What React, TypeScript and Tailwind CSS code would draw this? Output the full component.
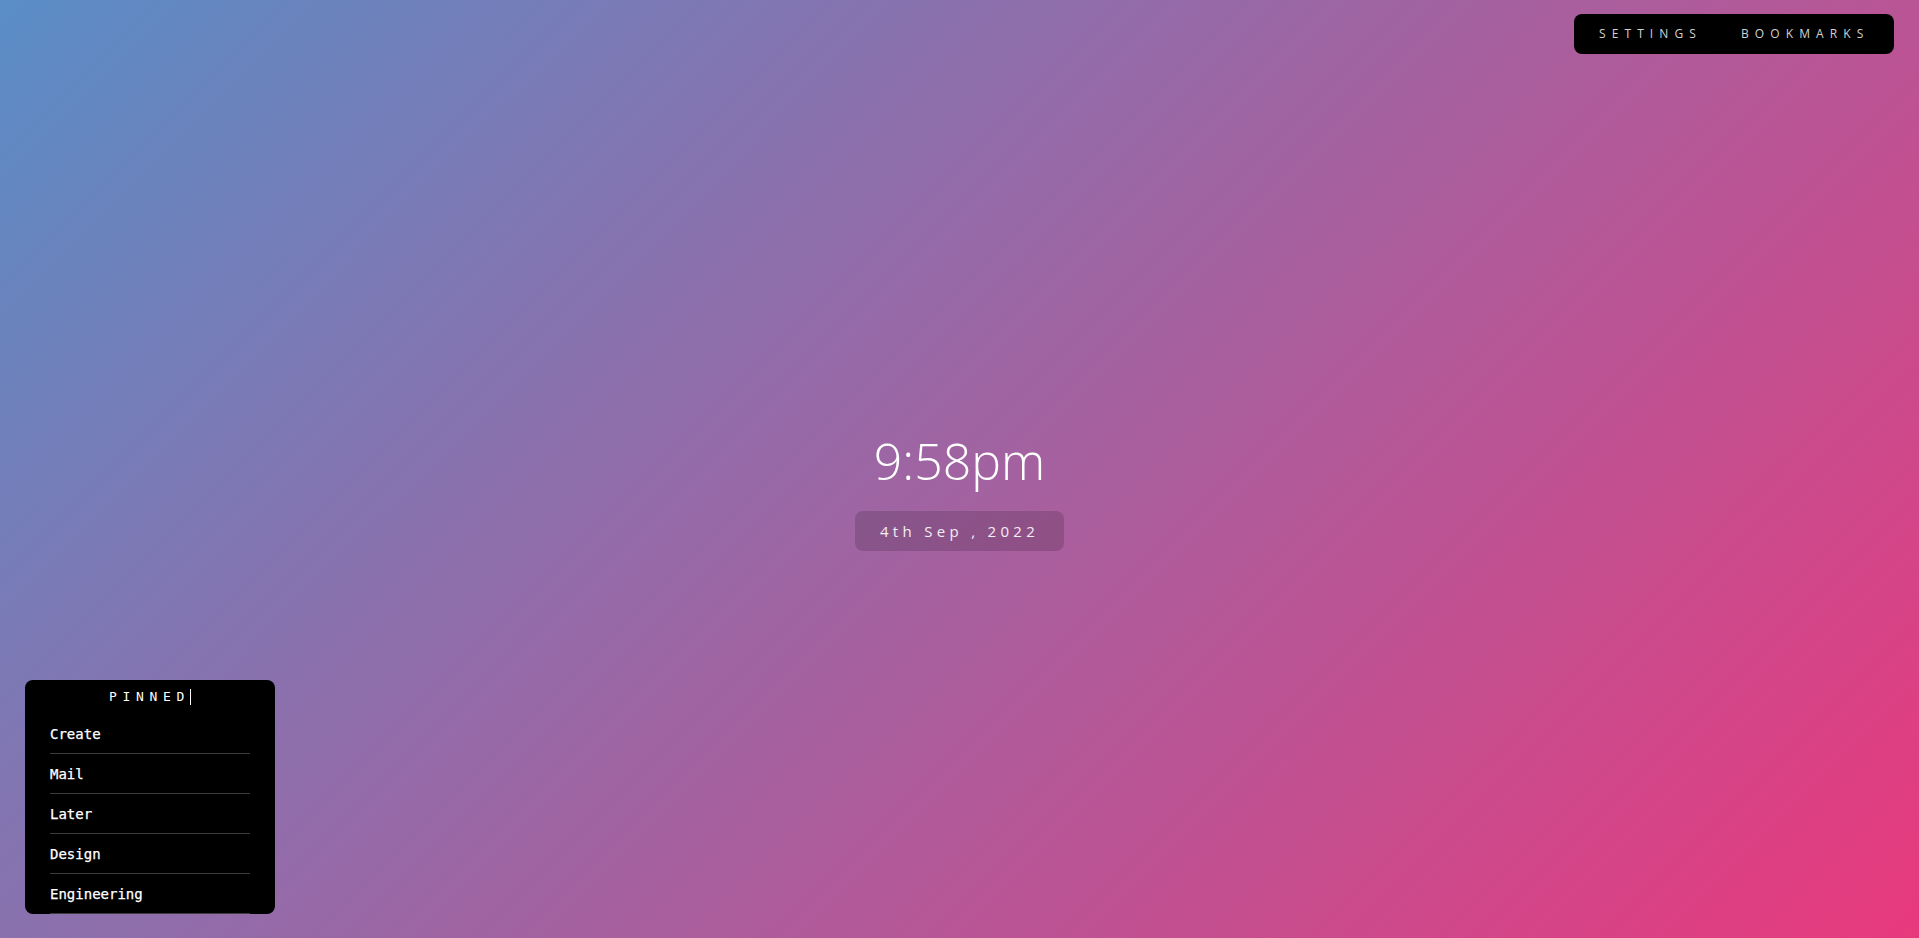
const pinned = ['Create', 'Mail', 'Later', 'Design', 'Engineering']

function Nav() {
  return (
    <div className="flex justify-end pt-[14px] pr-[25px]">
      <div className="flex h-[40px] w-[320px] items-center gap-[39px] rounded-lg bg-black px-[25px] font-['Open_Sans',sans-serif] text-[12px] tracking-[6.1px] text-[#d2d2d2]">
        <span>SETTINGS</span>
        <span>BOOKMARKS</span>
      </div>
    </div>
  )
}

function Clock() {
  return (
    <div className="flex flex-1 flex-col items-center pt-[373px]">
      <div className="font-['Open_Sans',sans-serif] text-[50px] font-light leading-[68px] text-white">9:58pm</div>
      <div className="mt-[16px] flex h-[40px] items-center rounded-lg bg-black/15 px-[25px] font-['Open_Sans',sans-serif] text-[15px] tracking-[4.3px] text-white/90">
        4th Sep , 2022
      </div>
    </div>
  )
}

function Pinned() {
  return (
    <div className="pb-[24px] pl-[25px]">
      <div className="h-[234px] w-[250px] overflow-hidden rounded-lg bg-black font-['DejaVu_Sans_Mono',monospace] text-white">
        <div className="flex h-[34px] items-center justify-center">
          <span className="text-[13px] tracking-[5.7px]">PINNED</span>
          <span className="h-[16px] w-px bg-white" />
        </div>
        <ul className="px-[25px]">
          {pinned.map(item => (
            <li key={item} className="flex h-[40px] items-center border-b border-[#3c3c3c] pt-[2px] text-[14px] [-webkit-text-stroke:0.25px_white]">
              {item}
            </li>
          ))}
        </ul>
      </div>
    </div>
  )
}

export default function App() {
  return (
    <div className="flex h-screen w-full flex-col overflow-hidden bg-[linear-gradient(135deg,#5a8dc6,#e8397d)]">
      <Nav />
      <Clock />
      <Pinned />
    </div>
  )
}
